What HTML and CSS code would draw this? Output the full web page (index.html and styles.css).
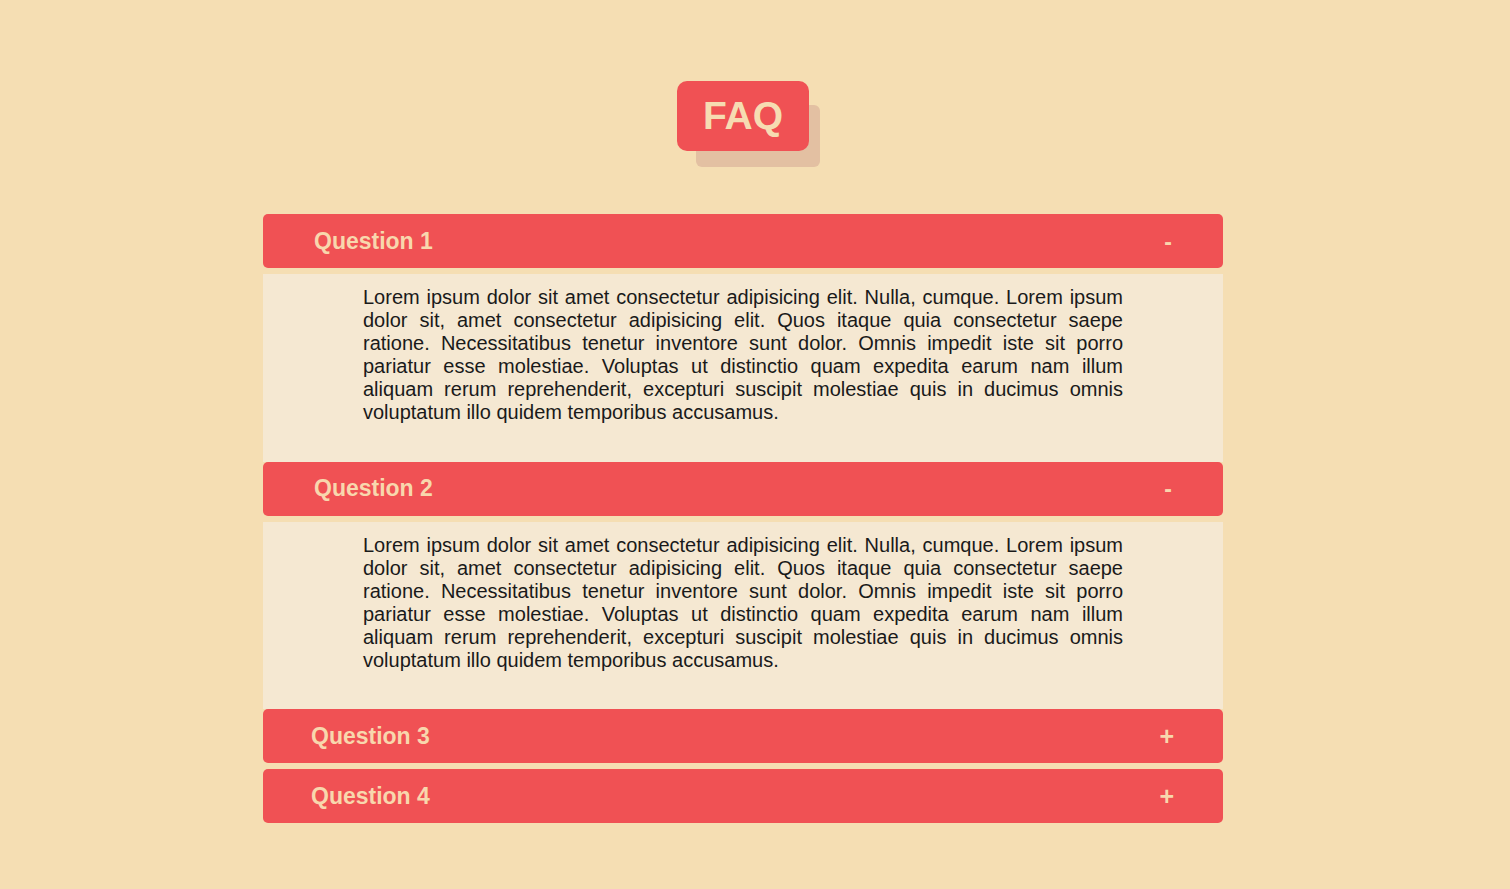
FILE: index.html
```html
<!DOCTYPE html>
<html lang="en">
<head>
<meta charset="utf-8">
<title>FAQ</title>
<link rel="stylesheet" href="styles.css">
</head>
<body>
<main class="page">
  <h1 class="title">FAQ</h1>
  <section class="faq">
    <div class="item open">
      <div class="question"><span class="q-text">Question 1</span><span class="toggle">-</span></div>
      <div class="answer"><p>Lorem ipsum dolor sit amet consectetur adipisicing elit. Nulla, cumque. Lorem ipsum dolor sit, amet consectetur adipisicing elit. Quos itaque quia consectetur saepe ratione. Necessitatibus tenetur inventore sunt dolor. Omnis impedit iste sit porro pariatur esse molestiae. Voluptas ut distinctio quam expedita earum nam illum aliquam rerum reprehenderit, excepturi suscipit molestiae quis in ducimus omnis voluptatum illo quidem temporibus accusamus.</p></div>
    </div>
    <div class="item open">
      <div class="question"><span class="q-text">Question 2</span><span class="toggle">-</span></div>
      <div class="answer"><p>Lorem ipsum dolor sit amet consectetur adipisicing elit. Nulla, cumque. Lorem ipsum dolor sit, amet consectetur adipisicing elit. Quos itaque quia consectetur saepe ratione. Necessitatibus tenetur inventore sunt dolor. Omnis impedit iste sit porro pariatur esse molestiae. Voluptas ut distinctio quam expedita earum nam illum aliquam rerum reprehenderit, excepturi suscipit molestiae quis in ducimus omnis voluptatum illo quidem temporibus accusamus.</p></div>
    </div>
    <div class="item">
      <div class="question"><span class="q-text">Question 3</span><span class="toggle">+</span></div>
    </div>
    <div class="item">
      <div class="question"><span class="q-text">Question 4</span><span class="toggle">+</span></div>
    </div>
  </section>
</main>
</body>
</html>
```
FILE: styles.css
```css
* { box-sizing: border-box; }
html, body { margin: 0; padding: 0; }
body {
  background: #f5deb3;
  font-family: "Liberation Sans", Arial, sans-serif;
  color: #1a1a1a;
}
.page {
  display: flex;
  flex-direction: column;
  align-items: center;
  padding: 81px 24px 0 0;
}
.title {
  margin: 0 0 63px 0;
  width: 132px;
  height: 70px;
  display: flex;
  align-items: center;
  justify-content: center;
  background: #f05154;
  color: #f6dcb2;
  font-size: 39px;
  font-weight: bold;
  border-radius: 10px;
  box-shadow: 15px 20px 0 -4px #e3c0a2;
}
.faq {
  width: 960px;
  display: flex;
  flex-direction: column;
}
.question {
  height: 54px;
  margin-bottom: 6px;
  background: #f05154;
  border-radius: 5px;
  display: flex;
  align-items: center;
  justify-content: space-between;
  padding: 0 49px 0 48px;
  color: #f8d7ad;
  font-weight: bold;
  font-size: 23px;
}
.open .question { padding-left: 51px; padding-right: 51px; }
.toggle { font-size: 25px; }
.open .toggle { font-size: 23px; transform: translateY(1px); }
.answer {
  background: #f5e8d2;
  padding: 12px 100px 37.5px;
}
.answer p {
  margin: 0;
  font-size: 20px;
  line-height: 23px;
  text-align: justify;
}
```
